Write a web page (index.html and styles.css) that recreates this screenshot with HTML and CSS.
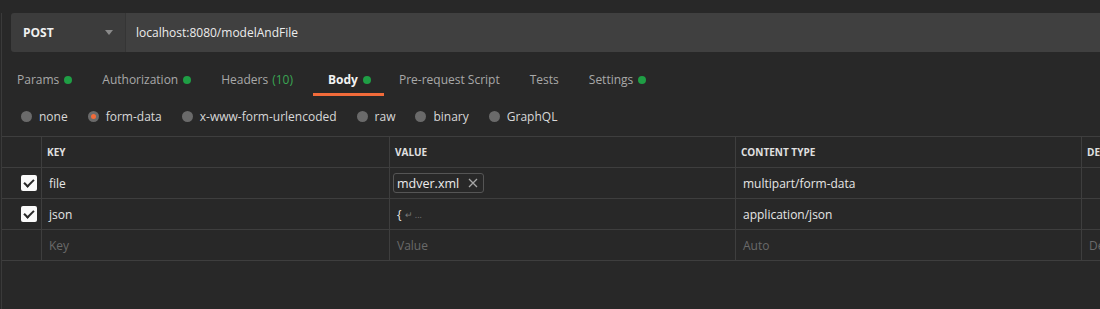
FILE: index.html
```html
<!DOCTYPE html>
<html lang="en">
<head>
  <meta charset="UTF-8">
  <title>Request - modelAndFile</title>
  <link rel="stylesheet" href="styles.css">
</head>
<body>
  <div class="app">

    <!-- Method + URL -->
    <div class="request-bar">
      <div class="method">
        <span>POST</span>
        <span class="caret"></span>
      </div>
      <div class="url">localhost:8080/modelAndFile</div>
    </div>

    <!-- Request tabs -->
    <div class="tabs">
      <div class="tab">Params <i class="dot"></i></div>
      <div class="tab">Authorization <i class="dot"></i></div>
      <div class="tab wide">Headers <span class="count">(10)</span></div>
      <div class="tab active">Body <i class="dot"></i></div>
      <div class="tab">Pre-request Script</div>
      <div class="tab">Tests</div>
      <div class="tab">Settings <i class="dot"></i></div>
    </div>

    <!-- Body modes -->
    <div class="modes">
      <label class="mode"><i class="radio"></i>none</label>
      <label class="mode"><i class="radio checked"></i>form-data</label>
      <label class="mode"><i class="radio"></i>x-www-form-urlencoded</label>
      <label class="mode"><i class="radio"></i>raw</label>
      <label class="mode"><i class="radio"></i>binary</label>
      <label class="mode"><i class="radio"></i>GraphQL</label>
    </div>

    <!-- Form data table -->
    <div class="grid">
      <div class="cell head"></div>
      <div class="cell head">Key</div>
      <div class="cell head">Value</div>
      <div class="cell head">Content Type</div>
      <div class="cell head">Description</div>

      <div class="cell check"><i class="box"></i></div>
      <div class="cell">file</div>
      <div class="cell">
        <span class="chip">mdver.xml
          <svg class="x" width="10" height="10" viewBox="0 0 10 10"><path d="M1 1L9 9M9 1L1 9" stroke="#a6a6a6" stroke-width="1.3" fill="none"/></svg>
        </span>
      </div>
      <div class="cell">multipart/form-data</div>
      <div class="cell"></div>

      <div class="cell check"><i class="box"></i></div>
      <div class="cell">json</div>
      <div class="cell">{ <span class="more">&#x21B5; ...</span></div>
      <div class="cell">application/json</div>
      <div class="cell"></div>

      <div class="cell"></div>
      <div class="cell muted">Key</div>
      <div class="cell muted">Value</div>
      <div class="cell muted">Auto</div>
      <div class="cell muted">Description</div>
    </div>

  </div>
</body>
</html>
```

FILE: styles.css
```css
* {
  margin: 0;
  padding: 0;
  box-sizing: border-box;
}

body {
  background: #282828;
  font-family: "Open Sans", "Liberation Sans", sans-serif;
  font-size: 12px;
  color: #e8e8e8;
  overflow: hidden;
}

/* the panel has a thin line on its left */
.app {
  margin-left: 1px;
  border-left: 1px solid #3a3a3a;
  height: 309px;
  white-space: nowrap;
}

/* Method + URL bar */
.request-bar {
  display: flex;
  height: 39px;
  margin: 13px 0 0 9px;
}
.method {
  width: 115px;
  display: flex;
  align-items: center;
  justify-content: space-between;
  padding: 0 12px 0 12px;
  background: #3c3c3c;
  border-radius: 3px 0 0 3px;
  border-right: 1px solid #353535;
  font-weight: 700;
  color: #f0f0f0;
}
.caret {
  width: 0;
  height: 0;
  border-left: 4px solid transparent;
  border-right: 4px solid transparent;
  border-top: 5px solid #8a8a8a;
}
.url {
  flex: 1;
  display: flex;
  align-items: center;
  padding-left: 10px;
  background: #404040;
  color: #ececec;
}

/* Tabs */
.tabs {
  display: flex;
  margin-top: 13px;
}
.tab {
  display: flex;
  align-items: center;
  height: 31px;
  padding: 1px 15px 0;
  border-bottom: 3px solid transparent;
  color: #a8a8a8;
}
.tab.wide {
  padding-right: 20px;
}
.tab.active {
  color: #f2f2f2;
  font-weight: 700;
  border-bottom-color: #f26b3a;
  padding: 1px 13px 0 15px;
}
.dot {
  width: 8px;
  height: 8px;
  margin-left: 5px;
  border-radius: 50%;
  background: #1f9e45;
}
.count {
  color: #3aa653;
  margin-left: 4px;
}

/* Body mode radios */
.modes {
  display: flex;
  align-items: center;
  height: 22px;
  margin-top: 9px;
  padding-left: 19px;
  gap: 20px;
}
.mode {
  display: flex;
  align-items: center;
  color: #d8d8d8;
}
.radio {
  width: 11px;
  height: 11px;
  margin-right: 7px;
  border-radius: 50%;
  background: #6a6a6a;
  position: relative;
}
.radio.checked:after {
  content: "";
  position: absolute;
  left: 3px;
  top: 3px;
  width: 5px;
  height: 5px;
  border-radius: 50%;
  background: #f26b3a;
}

/* Key/value grid */
.grid {
  display: grid;
  grid-template-columns: 39px 347px 345px 345px 1fr;
  grid-auto-rows: 30px;
  gap: 1px;
  margin-top: 9px;
  background: #3e3e3e;
  border-top: 1px solid #3e3e3e;
  border-bottom: 1px solid #3e3e3e;
}
.cell {
  display: flex;
  align-items: center;
  padding-left: 7px;
  background: #282828;
  overflow: hidden;
  color: #e6e6e6;
}
.cell.head {
  padding-left: 5px;
  font-size: 10px;
  font-weight: 700;
  text-transform: uppercase;
  color: #e0e0e0;
}
.cell.muted {
  color: #6a6a6a;
}
.cell.check {
  padding-left: 19px;
}
.box {
  width: 16px;
  height: 16px;
  border-radius: 2px;
  background: #fafafa;
  position: relative;
}
.box:after {
  content: "";
  position: absolute;
  left: 5px;
  top: 2px;
  width: 4px;
  height: 8px;
  border: solid #282828;
  border-width: 0 2px 2px 0;
  transform: rotate(45deg);
}
.chip {
  display: flex;
  align-items: center;
  height: 20px;
  margin-left: -4px;
  padding: 0 5px 0 3px;
  border: 1px solid #555555;
  border-radius: 3px;
  color: #ececec;
  font-size: 12.5px;
}
.chip .x {
  margin-left: 9px;
}
.more {
  margin-left: 3px;
  color: #7a7a7a;
  font-size: 9px;
}
```
